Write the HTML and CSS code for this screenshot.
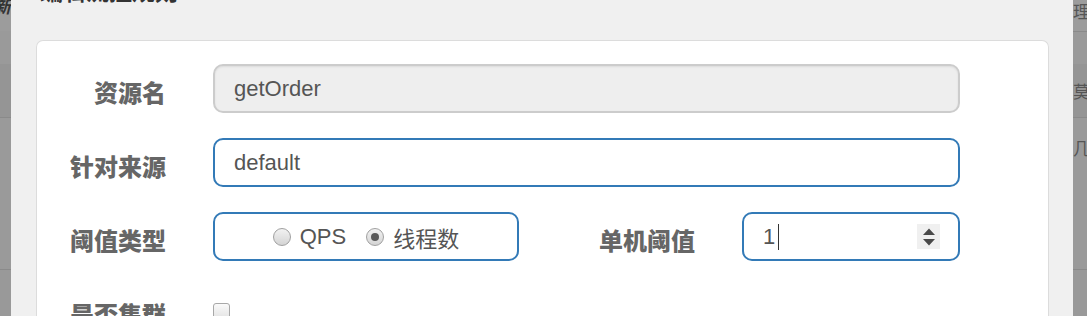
FILE: index.html
```html
<!DOCTYPE html>
<html lang="zh-CN">
<head>
<meta charset="utf-8">
<title>编辑流控规则</title>
<link rel="stylesheet" href="styles.css">
</head>
<body>
<div class="page">
  <div class="backdrop backdrop-left">
    <div class="bg-row bg-row-a"><span class="bg-text bg-text-left">新</span></div>
    <div class="bg-row bg-row-b"></div>
    <div class="bg-row bg-row-c"></div>
    <div class="bg-row bg-row-d"></div>
    <div class="bg-row bg-row-e"></div>
  </div>
  <div class="modal">
    <div class="modal-title">编辑流控规则</div>
    <div class="card">
      <div class="form-row">
        <div class="label">资源名</div>
        <div class="field field-disabled wide">getOrder</div>
      </div>
      <div class="form-row">
        <div class="label">针对来源</div>
        <div class="field field-active wide">default</div>
      </div>
      <div class="form-row">
        <div class="label">阈值类型</div>
        <div class="field field-active radio-group">
          <span class="radio"></span><span class="radio-text">QPS</span>
          <span class="radio radio-checked"></span><span class="radio-text">线程数</span>
        </div>
        <div class="label label-mid">单机阈值</div>
        <div class="field field-active number">
          <span class="num-value">1</span><span class="caret"></span>
          <span class="spinner">
            <svg width="14" height="22" viewBox="0 0 14 22"><path d="M1 9 L7 2.5 L13 9 Z M1 13 L7 19.5 L13 13 Z" fill="#4a4a4a"/></svg>
          </span>
        </div>
      </div>
      <div class="form-row">
        <div class="label">是否集群</div>
        <span class="checkbox"></span>
      </div>
    </div>
  </div>
  <div class="backdrop backdrop-right">
    <div class="bg-row bg-row-a"><span class="bg-text bg-text-first">理</span></div>
    <div class="bg-row bg-row-b"></div>
    <div class="bg-row bg-row-c"><span class="bg-text">莫</span></div>
    <div class="bg-row bg-row-d"><span class="bg-text bg-text-top">几</span></div>
    <div class="bg-row bg-row-e"></div>
  </div>
</div>
</body>
</html>
```

FILE: styles.css
```css
html, body {
  margin: 0;
  padding: 0;
  height: 316px;
  overflow: hidden;
  background: #f0f0f0;
  font-family: "Liberation Sans", "Noto Sans CJK SC", sans-serif;
}

.page {
  display: flex;
  width: 1087px;
  height: 316px;
  overflow: hidden;
}

.backdrop {
  background: #999999;
  display: flex;
  flex-direction: column;
  overflow: hidden;
  flex: none;
}
.backdrop-left { width: 11px; }
.backdrop-right { width: 14px; }

.bg-row {
  border-bottom: 1px solid #8a8a8a;
  overflow: hidden;
  display: flex;
  align-items: center;
  flex: none;
}
.bg-row-a { height: 31px; background: #9c9c9c; }
.bg-row-b { height: 32px; border-bottom: none; background: #9a9a9a; }
.bg-row-c { height: 53px; background: #959595; }
.bg-row-d { height: 151px; align-items: flex-start; background: #9a9a9a; }
.bg-row-e { flex: 1; border-bottom: none; background: #999999; }
.backdrop-left .bg-row-a { border-bottom: none; }
.backdrop-left .bg-row-b { height: 33px; }

.bg-text {
  font-family: "Noto Sans CJK SC", sans-serif;
  font-size: 17px;
  line-height: 20px;
  color: #555;
  white-space: nowrap;
}
.bg-text-first { margin-top: -10px; }
.bg-text-left {
  color: #333;
  font-weight: bold;
  font-style: italic;
  margin-top: -20px;
  margin-left: -6px;
}
.bg-text-top { margin-top: 20px; }

.modal {
  flex: 1;
  background: #f0f0f0;
  padding: 0 24px 0 25px;
  overflow: hidden;
}

.modal-title {
  font-family: "Noto Sans CJK SC", sans-serif;
  font-size: 23px;
  font-weight: bold;
  line-height: 24px;
  height: 24px;
  color: #333;
  margin-top: -22px;
  padding-left: 4px;
}

.card {
  margin-top: 38px;
  background: #ffffff;
  border: 1px solid #dcdcdc;
  border-bottom: none;
  border-radius: 7px 7px 0 0;
  padding-top: 23px;
  height: 400px;
}

.form-row {
  display: flex;
  align-items: center;
  height: 49px;
  margin-bottom: 25px;
}

.label {
  width: 129px;
  flex: none;
  text-align: right;
  margin-right: 47px;
  padding-top: 6px;
  font-family: "Noto Sans CJK SC", sans-serif;
  font-weight: 900;
  font-size: 24px;
  color: #666;
  line-height: 30px;
}
.label-mid { width: 176px; }

.field {
  box-sizing: border-box;
  height: 49px;
  border-radius: 10px;
  border: 2px solid #337ab7;
  background: #fff;
  display: flex;
  align-items: center;
  padding-left: 19px;
  font-size: 22px;
  color: #555;
  flex: none;
}
.wide { width: 747px; }
.field-disabled {
  background: #eeeeee;
  border-color: #cccccc;
  box-shadow: inset 0 1px 2px rgba(0,0,0,0.08);
}

.radio-group {
  width: 306px;
  justify-content: center;
  padding-left: 0;
}
.radio {
  box-sizing: border-box;
  width: 18px;
  height: 18px;
  border-radius: 50%;
  border: 1px solid #a0a0a0;
  background: linear-gradient(#f2f2f2, #d4d4d4);
  margin-right: 9px;
  position: relative;
  flex: none;
}
.radio-checked::after {
  content: "";
  position: absolute;
  left: 4px;
  top: 4px;
  width: 8px;
  height: 8px;
  border-radius: 50%;
  background: #5a5a5a;
}
.radio-text {
  font-family: "Liberation Sans", "Noto Sans CJK SC", sans-serif;
  margin-right: 20px;
}
.radio-text:last-child { margin-right: 0; }

.number {
  width: 218px;
  padding-right: 18px;
}
.num-value { line-height: 26px; }
.caret {
  width: 1px;
  height: 26px;
  background: #333;
  margin-left: 3px;
}
.spinner {
  margin-left: auto;
  width: 23px;
  height: 25px;
  background: #f0f0f0;
  display: flex;
  align-items: center;
  justify-content: center;
}

.checkbox {
  box-sizing: border-box;
  width: 17px;
  height: 17px;
  border: 1px solid #a8a8a8;
  border-radius: 3px;
  background: linear-gradient(#fafafa, #e2e2e2);
  flex: none;
  margin-top: 2px;
}
```
